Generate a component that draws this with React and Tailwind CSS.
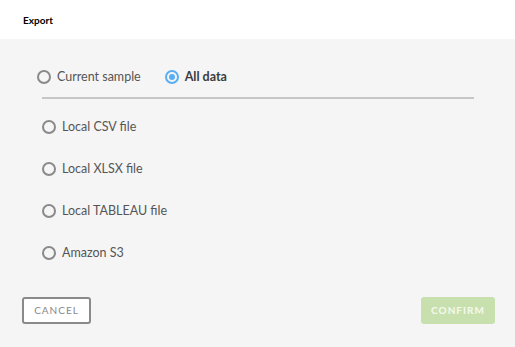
import { useState } from 'react'

function Radio({ checked, label, bold, onClick }) {
  return (
    <button onClick={onClick} className="flex items-center gap-[6px] text-left leading-[18px]">
      {checked ? (
        <span className="w-[14px] h-[14px] shrink-0 rounded-full border-2 border-[#5aaef2] flex items-center justify-center">
          <span className="w-[6px] h-[6px] rounded-full bg-[#5aaef2]" />
        </span>
      ) : (
        <span className="w-[14px] h-[14px] shrink-0 rounded-full border-2 border-[#8a8a8a]" />
      )}
      <span className={bold ? 'text-[12.5px] font-bold text-[#3c3c3c]' : 'text-[12.5px] text-[#555555]'}>{label}</span>
    </button>
  )
}

export default function App() {
  const [scope, setScope] = useState('all')
  const [target, setTarget] = useState('')
  const targets = ['Local CSV file', 'Local XLSX file', 'Local TABLEAU file', 'Amazon S3']

  return (
    <div className="w-[515px] h-[347px] flex flex-col bg-[#f5f5f5]" style={{ fontFamily: 'Lato, "Open Sans", sans-serif' }}>
      <div className="h-[39px] bg-white flex items-center px-[23px] pt-[2px]">
        <span className="text-[10px] font-bold text-black">Export</span>
      </div>
      <div className="flex-1 flex flex-col px-[42px]">
        <div className="flex items-center gap-[24px] pt-[29px] -ml-[5px]">
          <Radio checked={scope === 'sample'} label="Current sample" onClick={() => setScope('sample')} />
          <Radio checked={scope === 'all'} label="All data" bold onClick={() => setScope('all')} />
        </div>
        <div className="h-[2px] bg-[#c6c6c6] mt-[11px] w-[432px]" />
        <div className="flex flex-col gap-[24px] pt-[19px]">
          {targets.map(t => (
            <Radio key={t} checked={target === t} label={t} onClick={() => setTarget(t)} />
          ))}
        </div>
      </div>
      <div className="flex justify-between items-center px-[22px] pb-[23px]">
        <button className="w-[69px] h-[27px] border-2 border-[#8a8a8a] rounded-[3px] bg-white text-[10px] tracking-[1px] text-[#888888]">CANCEL</button>
        <button className="w-[74px] h-[27px] rounded-[3px] bg-[#c8e0ad] text-[10px] font-bold tracking-[1px] text-white/80 mr-[-2px]">CONFIRM</button>
      </div>
    </div>
  )
}
